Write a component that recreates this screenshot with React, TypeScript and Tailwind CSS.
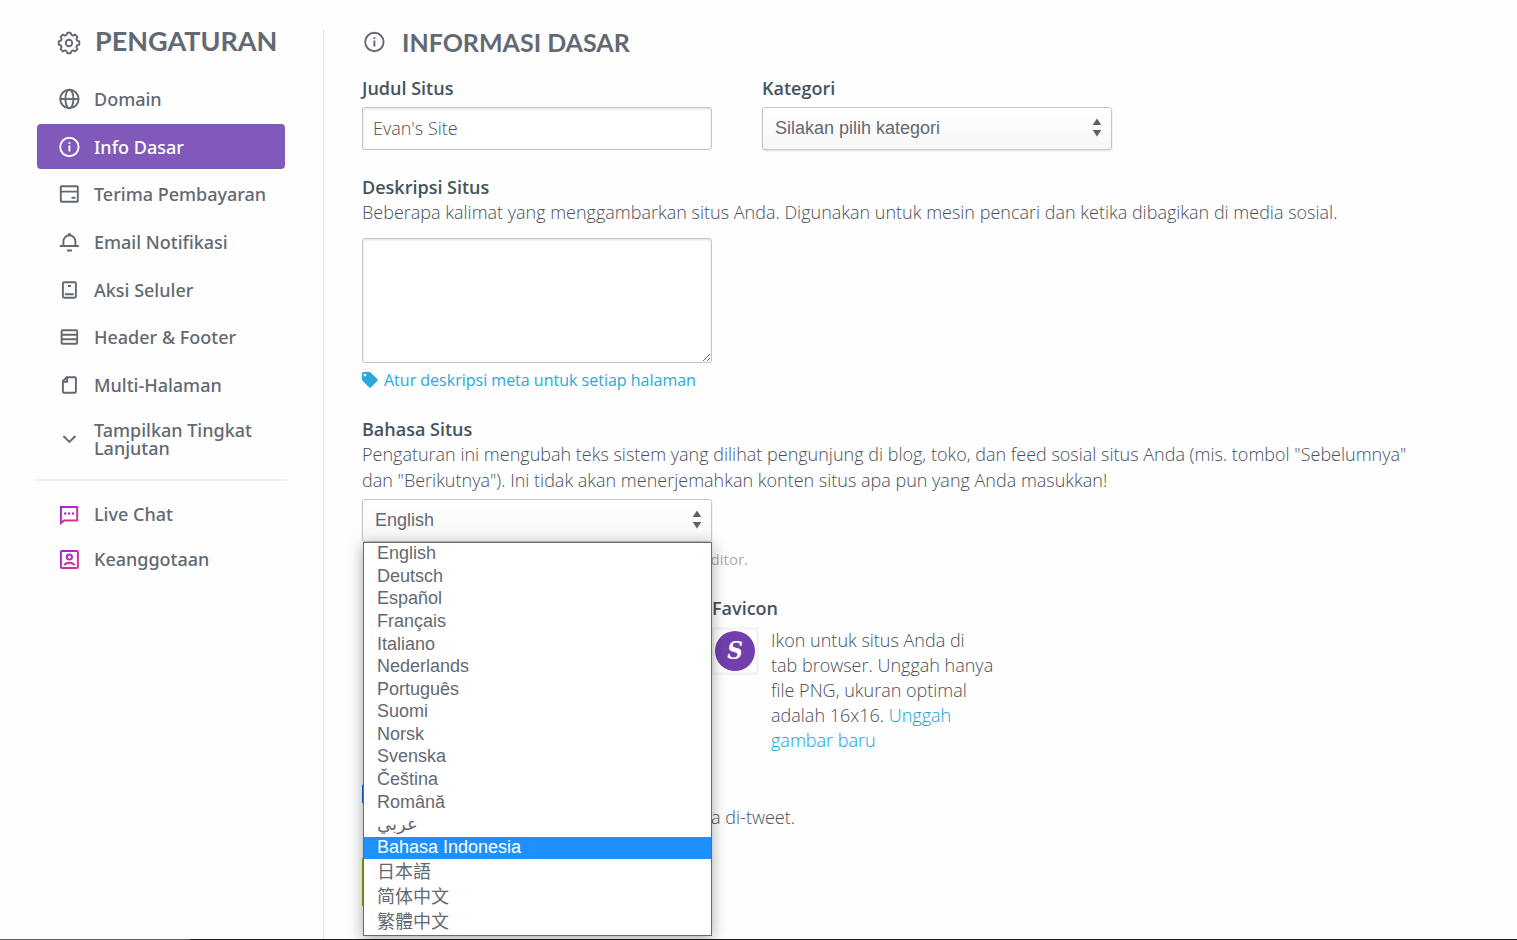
import { useState } from "react";
import type { ReactNode } from "react";

interface NavItem {
  label: string;
  icon: ReactNode;
}

const GEAR_POINTS = Array.from({ length: 8 }, (_, i) =>
  [[-17, 8.4], [-9, 10.4], [9, 10.4], [17, 8.4]].map(([offset, r]) => {
    const a = ((i * 45 + offset - 90) * Math.PI) / 180;
    return `${(12 + r * Math.cos(a)).toFixed(2)},${(12 + r * Math.sin(a)).toFixed(2)}`;
  }).join(" ")
).join(" ");

function Icon({ children }: { children: ReactNode }) {
  return (
    <svg
      viewBox="0 0 22 22"
      className="w-[22px] h-[22px] shrink-0"
      fill="none"
      stroke="currentColor"
      strokeWidth="1.9"
      aria-hidden="true"
    >
      {children}
    </svg>
  );
}

function InfoIcon() {
  return (
    <Icon>
      <circle cx="11.4" cy="11" r="9.2" />
      <path d="M11.4 9.6v5.9M11.4 6.3v1.8" />
    </Icon>
  );
}

const NAV_ITEMS: NavItem[] = [
  {
    label: "Domain",
    icon: (
      <Icon>
        <circle cx="11.4" cy="11" r="9.2" />
        <ellipse cx="11.4" cy="11" rx="4" ry="9.2" />
        <path d="M2.4 11h18" />
      </Icon>
    ),
  },
  { label: "Info Dasar", icon: <InfoIcon /> },
  {
    label: "Terima Pembayaran",
    icon: (
      <Icon>
        <rect x="2.8" y="3.3" width="17" height="15.4" rx="0.6" />
        <path d="M2.8 8.6h17M13.5 14.7h4" />
      </Icon>
    ),
  },
  {
    label: "Email Notifikasi",
    icon: (
      <Icon>
        <path d="M1.8 15h19M5.4 15v-4.5a6 6.3 0 0 1 12 0V15M8.9 19.5h5M9.9 3.2h3" />
      </Icon>
    ),
  },
  {
    label: "Aksi Seluler",
    icon: (
      <Icon>
        <rect x="4.9" y="3.3" width="13" height="15.4" rx="1.2" />
        <path d="M6.8 15.2h9M9.9 7h3" />
      </Icon>
    ),
  },
  {
    label: "Header & Footer",
    icon: (
      <Icon>
        <rect x="3.6" y="4.3" width="15.6" height="13.4" rx="1" />
        <path d="M3.6 8.7h15.6M3.6 13.3h15.6" />
      </Icon>
    ),
  },
  {
    label: "Multi-Halaman",
    icon: (
      <Icon>
        <path d="M8.6 3.3h8.3a1 1 0 0 1 1 1v13.4a1 1 0 0 1-1 1h-11a1 1 0 0 1-1-1V7.2z" />
        <path d="M9.1 3.5v4.2h-4" />
      </Icon>
    ),
  },
];

const HELP_ITEMS: NavItem[] = [
  {
    label: "Live Chat",
    icon: (
      <Icon>
        <defs>
          <linearGradient id="chat-gradient" gradientUnits="userSpaceOnUse" x1="2" y1="3" x2="20" y2="19">
            <stop stopColor="#8a2be2" />
            <stop offset="1" stopColor="#f0308a" />
          </linearGradient>
        </defs>
        <path d="M2.9 20V4h16.3v13.4H6z" stroke="url(#chat-gradient)" strokeWidth="2" />
        <g fill="#b32bc0" stroke="none">
          <circle cx="7.2" cy="10.5" r="1.2" />
          <circle cx="11.1" cy="10.5" r="1.2" />
          <circle cx="15" cy="10.5" r="1.2" />
        </g>
      </Icon>
    ),
  },
  {
    label: "Keanggotaan",
    icon: (
      <Icon>
        <defs>
          <linearGradient id="member-gradient" gradientUnits="userSpaceOnUse" x1="2" y1="2" x2="20" y2="20">
            <stop stopColor="#8a2be2" />
            <stop offset="1" stopColor="#f0308a" />
          </linearGradient>
        </defs>
        <g stroke="url(#member-gradient)" strokeWidth="2">
          <rect x="2.9" y="2.9" width="17" height="17" rx="1" />
          <circle cx="11.4" cy="9" r="2.6" />
          <path d="M6.3 17.2c1.8-3.4 8.4-3.4 10.2 0" />
        </g>
      </Icon>
    ),
  },
];

const LANGUAGES = [
  "English",
  "Deutsch",
  "Español",
  "Français",
  "Italiano",
  "Nederlands",
  "Português",
  "Suomi",
  "Norsk",
  "Svenska",
  "Čeština",
  "Română",
  "عربي",
  "Bahasa Indonesia",
];

const CJK_LANGUAGES = ["日本語", "简体中文", "繁體中文"];

const FIELD_SHADOW = "shadow-[inset_0_1px_3px_rgba(0,0,0,0.12)]";
const LABEL = "block font-semibold pt-px leading-6 text-[#44545e]";

function NavLink({ item, active }: { item: NavItem; active: boolean }) {
  return (
    <a
      href="#"
      className={`flex items-center gap-3.5 h-[45px] pt-px pl-[21px] mr-0.5 rounded font-['Noto_Sans',sans-serif] font-medium ${
        active ? "bg-[#8159bb] text-white" : "text-[#636972]"
      }`}
    >
      {item.icon}
      {item.label}
    </a>
  );
}

function Sidebar() {
  return (
    <aside className="w-[250px] shrink-0 ml-[37px] mr-9">
      <h1 className="flex items-center gap-3.5 pl-5 h-7 mt-[27px] font-[Lato] font-bold text-[27px] leading-7 text-[#636972]">
        <svg
          viewBox="0 0 24 24"
          className="w-6 h-6 mt-1 shrink-0"
          fill="none"
          stroke="currentColor"
          strokeWidth="1.9"
          strokeLinejoin="round"
          aria-hidden="true"
        >
          <polygon points={GEAR_POINTS} />
          <circle cx="12" cy="12" r="3.2" />
        </svg>
        PENGATURAN
      </h1>

      <nav className="flex flex-col justify-between h-[331px] mt-[21px]">
        {NAV_ITEMS.map((item) => (
          <NavLink key={item.label} item={item} active={item.label === "Info Dasar"} />
        ))}
      </nav>

      <button className="flex items-center gap-3.5 w-full pl-[21px] pr-4 mt-3.5 text-left font-['Noto_Sans',sans-serif] font-medium leading-[18px] text-[#636972]">
        <Icon>
          <path d="m5.4 8 6 6 6-6" />
        </Icon>
        Tampilkan Tingkat Lanjutan
      </button>

      <hr className="mt-[22px] mb-2.5 border-0 h-0.5 bg-[#ededed]" />

      <nav className="flex flex-col">
        {HELP_ITEMS.map((item) => (
          <NavLink key={item.label} item={item} active={false} />
        ))}
      </nav>
    </aside>
  );
}

interface SelectBoxProps {
  id: string;
  options: string[];
  onOpen?: () => void;
}

function SelectBox({ id, options, onOpen }: SelectBoxProps) {
  return (
    <div className="relative">
      <select
        id={id}
        onMouseDown={(e) => {
          if (!onOpen) return;
          e.preventDefault();
          onOpen();
        }}
        className="appearance-none block w-full h-[43px] pl-3 pr-8 pb-0.5 rounded-[3px] border border-[#c3c5c9] bg-linear-to-b from-white to-[#f7f7f7] shadow-[0_1px_2px_rgba(0,0,0,0.12)] font-['Liberation_Sans',sans-serif] text-lg text-[#636972]"
      >
        {options.map((option) => (
          <option key={option}>{option}</option>
        ))}
      </select>
      <svg viewBox="0 0 10 20" className="absolute right-2.5 top-[11px] w-2.5 h-5 pointer-events-none" fill="#5b616b">
        <path d="M5 .5 9.3 7H.7zM5 18.500l4.300-6.500H.7z" />
      </svg>
    </div>
  );
}

function LanguageMenu() {
  const [active, setActive] = useState("Bahasa Indonesia");

  const row = (lang: string, size: string) => (
    <li
      key={lang}
      role="option"
      aria-selected={lang === active}
      onMouseEnter={() => setActive(lang)}
      className={`${size} flex items-center pl-[13px] ${lang === active ? "bg-[#1e90ff] text-white" : ""}`}
    >
      {lang}
    </li>
  );

  return (
    <div
      role="listbox"
      aria-label="Bahasa Situs"
      className="absolute z-10 top-full left-px right-0 border border-[#6a6a6a] bg-white shadow-[0_3px_14px_rgba(0,0,0,0.35)] font-['Liberation_Sans','Noto_Sans_CJK_SC',sans-serif] text-lg leading-5 text-[#636972]"
    >
      <ul className="flex flex-col h-[316px]">{LANGUAGES.map((lang) => row(lang, "flex-1 pb-0.5"))}</ul>
      <ul className="pb-px">{CJK_LANGUAGES.map((lang) => row(lang, "h-[25px]"))}</ul>
    </div>
  );
}

export default function App() {
  const [menuOpen, setMenuOpen] = useState(true);

  return (
    <div className="flex flex-col min-h-screen bg-[#fefefe] font-['Open_Sans',sans-serif] text-lg leading-[26px] text-[#4a505a]">
      <div className="flex flex-1">
        <Sidebar />

        <main className="flex-1 min-w-0 mt-[29px] pl-[38px] pr-8 border-l border-[#e2e3e5]">
          <h2 className="flex items-center gap-[17px] pl-px h-[25px] mb-[21px] font-[Lato] font-bold text-[25px] text-[#636972]">
            <InfoIcon />
            INFORMASI DASAR
          </h2>

          <div className="flex gap-[50px]">
            <div className="w-[350px]">
              <label htmlFor="title" className={`${LABEL} mb-[7px]`}>Judul Situs</label>
              <input
                id="title"
                defaultValue="Evan's Site"
                className={`block w-full h-[43px] px-2.5 pb-0.5 rounded-[3px] border border-[#c3c5c9] bg-white font-light ${FIELD_SHADOW}`}
              />
            </div>
            <div className="w-[350px]">
              <label htmlFor="category" className={`${LABEL} mb-[7px]`}>Kategori</label>
              <SelectBox id="category" options={["Silakan pilih kategori"]} />
            </div>
          </div>

          <section className="mt-6">
            <label htmlFor="description" className={LABEL}>Deskripsi Situs</label>
            <p className="font-light">Beberapa kalimat yang menggambarkan situs Anda. Digunakan untuk mesin pencari dan ketika dibagikan di media sosial.</p>
            <textarea
              id="description"
              className={`block w-[350px] h-[125px] mt-[13px] p-2.5 rounded-[3px] border border-[#c3c5c9] bg-white ${FIELD_SHADOW}`}
            />
            <a href="#" className="flex items-center gap-1.5 mt-1 text-base leading-[26px] text-[#2aa9da]">
              <svg viewBox="0 0 16 16" className="w-4 h-4" fill="currentColor" aria-hidden="true">
                <path fillRule="evenodd" d="M0 1.5Q0 0 1.500 0H8l7.500 7.200q.7.800 0 1.600l-6.700 6.700q-.8.700-1.600 0L0 8zM3 1.700a1.400 1.400 0 1 0 0 2.800 1.400 1.400 0 0 0 0-2.800z" />
              </svg>
              Atur deskripsi meta untuk setiap halaman
            </a>
          </section>

          <section className="mt-[23px]">
            <label htmlFor="language" className={LABEL}>Bahasa Situs</label>
            <p className="max-w-[1064px] font-light">
              Pengaturan ini mengubah teks sistem yang dilihat pengunjung di blog, toko, dan feed sosial situs Anda (mis. tombol "Sebelumnya" dan "Berikutnya"). Ini tidak akan menerjemahkan konten situs apa pun yang Anda masukkan!
            </p>
            <div className="relative w-[350px] mt-1.5">
              <SelectBox
                id="language"
                options={[...LANGUAGES, ...CJK_LANGUAGES]}
                onOpen={() => setMenuOpen((v) => !v)}
              />
              {menuOpen && <LanguageMenu />}
            </div>
            <p className="w-[386px] mt-1 text-right text-[15px] leading-[26px] text-[#a9adb3]">
              editor.
            </p>
          </section>

          <section className="mt-[23px] ml-[350px]">
            <h3 className={LABEL}>Favicon</h3>
            <div className="flex gap-3 mt-[5px]">
              <div className="flex items-center justify-center w-12 h-12 mt-0.5 -ml-px border-3 border-[#f5f5f5] bg-white">
                <span className="flex items-center justify-center w-10 h-10 rounded-full bg-[#7140ad] font-['DejaVu_Serif_Condensed','DejaVu_Serif',serif] italic font-bold text-2xl text-white">
                  S
                </span>
              </div>
              <p className="w-[223px] mt-[3px] font-light leading-[25px]">
                Ikon untuk situs Anda di tab browser. Unggah hanya file PNG, ukuran optimal adalah 16x16.{" "}
                <a href="#" className="text-[#0aa2dc]">Unggah gambar baru</a>
              </p>
            </div>
          </section>

          <section className="mt-[31px]">
            <input type="checkbox" defaultChecked aria-label="Twitter" className="block w-5 h-5 accent-[#0b66e0]" />
            <p className="w-[433px] text-right font-light">bisa di-tweet.</p>
            <button aria-label="Simpan" className="block w-32 h-12 mt-7 bg-[#89ad0f]" />
          </section>
        </main>
      </div>

      <div className="flex h-px bg-[#1c1c1c]">
        <div className="w-1/8 bg-[#5c5c5c]" />
      </div>
    </div>
  );
}
